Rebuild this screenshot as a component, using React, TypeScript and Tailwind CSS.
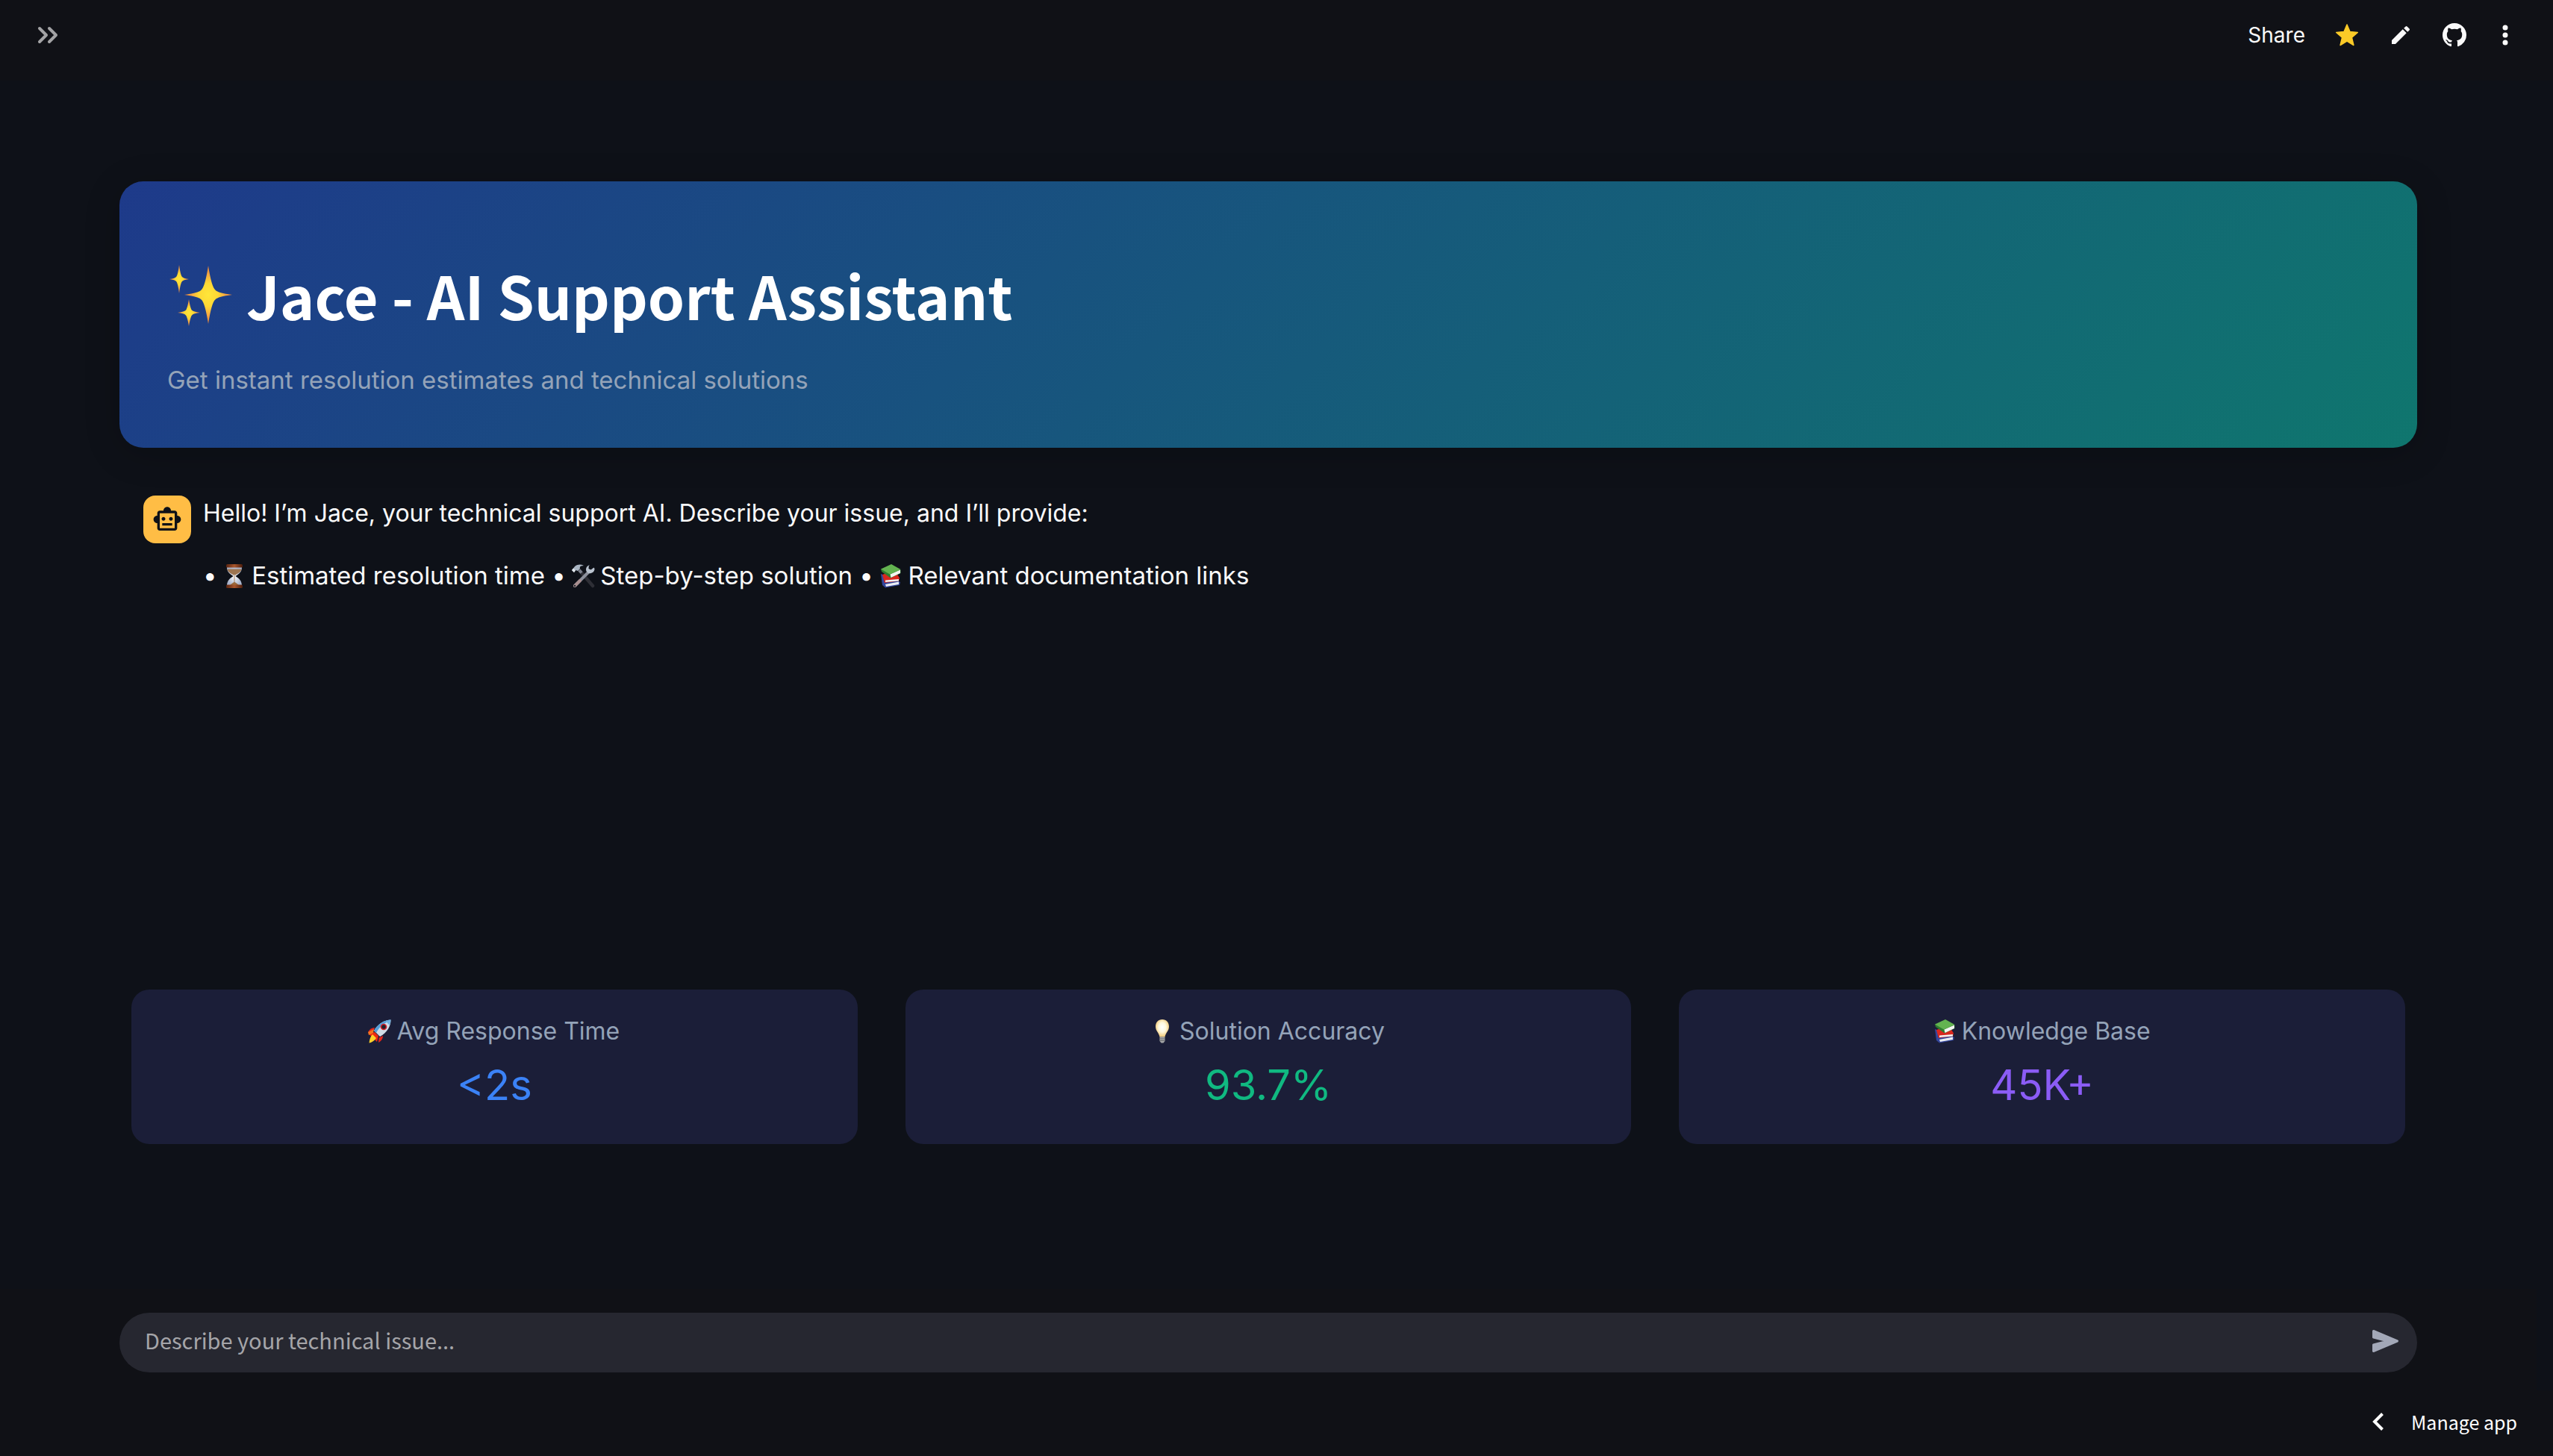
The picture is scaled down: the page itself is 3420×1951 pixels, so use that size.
import type { ReactNode } from "react";
import { MdEdit, MdOutlineSmartToy } from "react-icons/md";

function SparkleShape({ cx, cy, rx, ry }: { cx: number; cy: number; rx: number; ry: number }) {
  const kx = rx * 0.2;
  const ky = ry * 0.16;
  const d = `M${cx} ${cy - ry}Q${cx + kx * 0.7} ${cy - ky * 1.6} ${cx + kx * 1.5} ${cy - ky} Q${cx + kx * 2} ${cy - ky * 0.4} ${cx + rx} ${cy}Q${cx + kx * 2} ${cy + ky * 0.4} ${cx + kx * 1.5} ${cy + ky}Q${cx + kx * 0.7} ${cy + ky * 1.6} ${cx} ${cy + ry}Q${cx - kx * 0.7} ${cy + ky * 1.6} ${cx - kx * 1.5} ${cy + ky}Q${cx - kx * 2} ${cy + ky * 0.4} ${cx - rx} ${cy}Q${cx - kx * 2} ${cy - ky * 0.4} ${cx - kx * 1.5} ${cy - ky}Q${cx - kx * 0.7} ${cy - ky * 1.6} ${cx} ${cy - ry}Z`;
  return <path d={d} fill="url(#sparkle)" />;
}

function Sparkles() {
  return (
    <svg viewBox="0 0 88 88" className="size-[88px] shrink-0" role="img" aria-label="Sparkles">
      <defs>
        <radialGradient id="sparkle">
          <stop offset="0" stopColor="#ffe63a" />
          <stop offset="0.4" stopColor="#fdd835" />
          <stop offset="0.7" stopColor="#f5a742" />
          <stop offset="1" stopColor="#e8823a" />
        </radialGradient>
      </defs>
      <SparkleShape cx={55} cy={44} rx={32} ry={39} />
      <SparkleShape cx={16} cy={23} rx={13} ry={19} />
      <SparkleShape cx={29} cy={68} rx={15} ry={18} />
    </svg>
  );
}

function Emoji({ label, children }: { label: string; children: ReactNode }) {
  return (
    <svg viewBox="0 0 36 36" className="-mx-1 inline-block size-9 align-[-7px]" role="img" aria-label={label}>
      {children}
    </svg>
  );
}

function Hourglass() {
  return (
    <Emoji label="Hourglass">
      <defs>
        <linearGradient id="wood">
          <stop offset="0" stopColor="#5a2410" />
          <stop offset="0.5" stopColor="#a8562c" />
          <stop offset="1" stopColor="#4c1d0c" />
        </linearGradient>
        <radialGradient id="glass">
          <stop offset="0" stopColor="#ffffff" />
          <stop offset="1" stopColor="#a9b4cc" />
        </radialGradient>
      </defs>
      <path d="M8 6h20c0 7-4 9-8.500 12 4.500 3 8.500 6 8.500 13H8c0-7 4-10 8.500-13C12 15 8 13 8 6z" fill="url(#glass)" />
      <path d="M8.500 8.500h19c-.8 4-4 5.500-8.200 8h-2.600c-4.200-2.500-7.400-4-8.200-8z" fill="#9d7550" />
      <path d="M17.600 17h.8v9c2 1 5 3 6 5H11.600c1-2 4-4 6-5z" fill="#9a6a3c" />
      <rect x="7" y="2" width="22" height="4.500" rx="1.500" fill="url(#wood)" />
      <rect x="7" y="29.500" width="22" height="4.500" rx="1.500" fill="url(#wood)" />
    </Emoji>
  );
}

function Tools() {
  return (
    <Emoji label="Hammer and wrench">
      <path d="M13 10l18 21" stroke="#2e2f36" strokeWidth="4.500" strokeLinecap="round" />
      <path d="M13 10l3 3.500" stroke="#7d828e" strokeWidth="4" />
      <path d="M7 31L27 11" stroke="#8b8f9b" strokeWidth="4" strokeLinecap="round" />
      <path d="M7 31l7-7" stroke="#a98f90" strokeWidth="4" strokeLinecap="round" />
      <circle cx="7" cy="31" r="1.200" fill="#22242b" />
      <path d="M27 3c-4 1-6 5-4.500 8.500L25 14c4 1 8.500-1 8.500-6l-1-1.500-4 3-3-1.500.3-3.500z" fill="#b9c3cf" />
      <path d="M3 10l4-5c4-3 8-3 12-1-4 0-6 1-5 4l-3 3-3-1-2 3z" fill="#a9b5c2" />
      <path d="M3 10l2-2.500 3 3L6 13z" fill="#e3e9ee" />
    </Emoji>
  );
}

function Books() {
  return (
    <Emoji label="Books">
      <path d="M5 15l2 15 4 3.500 19-3.500 1-4-8-4z" fill="#33459b" />
      <path d="M11 29l18-3.500v3.500l-17 3z" fill="#e9ecf2" />
      <path d="M7 16l3 11 19-2.500 1-4-3-5-10-3z" fill="#d9271e" />
      <path d="M11 23.500l18-1.500v2.500l-18 1.500z" fill="#f1f1f1" />
      <path d="M5 8.500L6 12l12 8.500L31.500 14v-4.500z" fill="#2f7d30" />
      <path d="M17.500 15.500L31 9.500v4.500l-12.500 6z" fill="#f3f5f0" />
      <path d="M5 8.500L19 2l12.500 7L17 15.500z" fill="#63b350" />
    </Emoji>
  );
}

function Rocket() {
  return (
    <Emoji label="Rocket">
      <path d="M12 13c-4 0-7 2-9 6l6.500-.5zM23 24c0 4-2 7-6 9l.5-6.500z" fill="#e1251b" />
      <path d="M4 21l8-2 5 5-2 8-3-3-6 4 3-6z" fill="#ee2a12" />
      <path d="M9 22l5 5c-2 3-6 6-9.500 6.500C5 29 6 25 9 22z" fill="#fcd12a" />
      <path d="M3 19l8-4-1 5-6 3z" fill="#f5731f" />
      <path d="M33.500 2.500C25 3 17 7 11 17l8 8c10-6 14.500-14 14.500-22.500z" fill="#cfdbe6" />
      <path d="M33.500 2.500C25 3 17 7 11 17l3 3C18 12 25 7 33.500 2.500z" fill="#549ed8" />
      <path d="M33.500 2.500c-2.500.1-5 .6-7.200 1.600l5.600 5.600c1-2.300 1.500-4.800 1.600-7.200z" fill="#6fb0e0" />
      <circle cx="24" cy="12" r="4.300" fill="#d8202a" />
      <circle cx="24" cy="12" r="2.700" fill="#20232e" />
    </Emoji>
  );
}

function Bulb() {
  return (
    <Emoji label="Light bulb">
      <defs>
        <radialGradient id="bulb" cy="0.45">
          <stop offset="0" stopColor="#ffffff" />
          <stop offset="0.55" stopColor="#fff8dc" />
          <stop offset="1" stopColor="#f3cf85" />
        </radialGradient>
      </defs>
      <path d="M18 2c-5.500 0-9 4-9 9.500 0 6 4.500 8 5.500 14h7c1-6 5.500-8 5.500-14C27 6 23.500 2 18 2z" fill="url(#bulb)" />
      <path d="M14.500 25.500h7v5.500l-2 2.500h-3l-2-2.500z" fill="#a6a7a8" />
      <path d="M14.500 28h7M14.500 30.500h7" stroke="#66686c" strokeWidth="1" />
    </Emoji>
  );
}

function GithubMark() {
  return (
    <svg viewBox="0 0 16 16" fill="currentColor" className="size-8" aria-hidden="true">
      <path d="M8 0C3.58 0 0 3.58 0 8c0 3.540 2.290 6.530 5.470 7.590.4.070.55-.17.55-.38 0-.19-.01-.82-.01-1.490-2.010.37-2.530-.49-2.690-.94-.09-.23-.48-.94-.82-1.130-.28-.15-.68-.52-.01-.53.63-.01 1.080.58 1.230.82.72 1.210 1.870.87 2.330.66.07-.52.28-.87.51-1.070-1.780-.2-3.640-.89-3.640-3.950 0-.87.31-1.590.82-2.150-.08-.2-.36-1.020.08-2.120 0 0 .67-.21 2.200.82.640-.18 1.320-.27 2-.27s1.360.09 2 .27c1.530-1.040 2.200-.82 2.200-.82.44 1.100.16 1.920.08 2.120.51.56.82 1.270.82 2.150 0 3.070-1.870 3.750-3.650 3.950.29.25.54.73.54 1.480 0 1.070-.01 1.930-.01 2.200 0 .21.15.46.55.38A8.010 8.010 0 0 0 16 8c0-4.420-3.580-8-8-8z" />
    </svg>
  );
}

function Header() {
  return (
    <header className="flex h-[108px] shrink-0 items-start justify-between bg-[#101116] px-12 pt-[27px]">
      <button aria-label="Open sidebar" className="flex size-10 items-center text-[#a3a3a5]">
        <svg viewBox="0 0 32 32" fill="none" stroke="currentColor" strokeWidth="4" strokeLinecap="round" strokeLinejoin="round" className="size-8">
          <path d="M5 7l9 9-9 9M18 7l9 9-9 9" />
        </svg>
      </button>
      <nav className="flex h-10 items-center text-[#fafafa]">
        <button className="mr-10 text-[28px] leading-10">Share</button>
        <button aria-label="Favorite" className="mr-10">
          <svg viewBox="0 0 32 32" fill="#fbca27" stroke="#fbca27" strokeWidth="1.500" strokeLinejoin="round" className="size-8" aria-hidden="true">
            <path d="M16 2l4 9.500 10.300 1-7.800 6.800 2.400 10.200L16 24l-8.900 5.500 2.400-10.200-7.800-6.800 10.300-1z" />
          </svg>
        </button>
        <button aria-label="Edit" className="mr-10">
          <MdEdit className="size-8" />
        </button>
        <button aria-label="View on GitHub" className="mr-9">
          <GithubMark />
        </button>
        <button aria-label="More options">
          <svg viewBox="0 0 32 32" fill="currentColor" className="size-8" aria-hidden="true">
            <circle cx="16" cy="6" r="3.500" />
            <circle cx="16" cy="16" r="3.500" />
            <circle cx="16" cy="26" r="3.500" />
          </svg>
        </button>
      </nav>
    </header>
  );
}

function Metric({ icon, label, value, tone }: { icon: ReactNode; label: string; value: string; tone: string }) {
  return (
    <article className="rounded-3xl bg-[#1b1e38] px-8 pt-8 pb-[43px] text-center">
      <h2 className="text-[32px] leading-[48px] text-[#94a3b8]">
        {icon} {label}
      </h2>
      <p className={`mt-3 text-[56px] leading-[72px] ${tone}`}>{value}</p>
    </article>
  );
}

export default function App() {
  return (
    <div className="flex min-h-screen flex-col bg-[#0e1118] font-['Inter',sans-serif] text-[#fafafa]">
      <Header />
      <main className="flex grow flex-col pr-[182px] pl-40">
        <section className="mt-[135px] rounded-[32px] bg-[linear-gradient(135deg,#1e3a8a,#0f766e)] px-16 pt-[104px] pb-[67px] shadow-[0_8px_48px_rgba(0,0,0,0.2)]">
          <h1 className="flex items-center gap-[18px] font-['Noto_Sans_CJK_SC',sans-serif] text-[79px] leading-[96px] font-bold text-white">
            <Sparkles />
            Jace - AI Support Assistant
          </h1>
          <p className="mt-[42px] text-[33px] leading-[48px] text-[#94a3b8]">Get instant resolution estimates and technical solutions</p>
        </section>

        <section className="mt-16 flex min-h-[662px] gap-4 px-8 text-[32px] leading-[48px]">
          <div className="flex size-16 shrink-0 items-center justify-center rounded-2xl bg-[#ffbd45] text-[#0e1117]">
            <MdOutlineSmartToy className="size-10" />
          </div>
          <div className="flex flex-col gap-[35px]">
            <p>Hello! I’m Jace, your technical support AI. Describe your issue, and I’ll provide:</p>
            <p className="text-[33px]">
              • <Hourglass /> Estimated resolution time • <Tools /> Step-by-step solution • <Books /> Relevant documentation links
            </p>
          </div>
        </section>

        <section className="grid grid-cols-3 gap-16 px-4">
          <Metric icon={<Rocket />} label="Avg Response Time" value="<2s" tone="text-[#3b82f6]" />
          <Metric icon={<Bulb />} label="Solution Accuracy" value="93.7%" tone="text-[#10b981]" />
          <Metric icon={<Books />} label="Knowledge Base" value="45K+" tone="text-[#8b5cf6]" />
        </section>
      </main>

      <form className="mr-[22px] bg-[#101116] pt-8 pr-40 pb-6 pl-40 font-['Noto_Sans_CJK_SC',sans-serif]" onSubmit={(e) => e.preventDefault()}>
        <div className="flex h-20 items-center rounded-full bg-[#262730] pr-5 pl-[34px]">
          <input
            aria-label="Describe your technical issue"
            placeholder="Describe your technical issue..."
            className="mb-2 min-w-0 grow bg-transparent text-[29px] leading-[48px] outline-none placeholder:text-[#a5a5a9]"
          />
          <button aria-label="Send" className="mb-1 text-[#a3a8b8]">
            <svg viewBox="0 0 40 40" fill="currentColor" stroke="currentColor" strokeWidth="3" strokeLinejoin="round" className="size-10" aria-hidden="true">
              <path d="M1.500 6.500L33.500 20l-32 13.500v-8.500L18 20.700v-1.400L1.500 15z" />
            </svg>
          </button>
        </div>
      </form>

      <footer className="flex h-[88px] shrink-0 justify-end bg-[#101116] pt-[22px] pr-12 font-['Noto_Sans_CJK_SC',sans-serif]">
        <button className="flex h-10 items-center gap-8 text-[25px] leading-10 text-white">
          <svg viewBox="0 0 24 24" fill="none" stroke="currentColor" strokeWidth="4" className="size-6" aria-hidden="true">
            <path d="M17.500 1.500L7 12l10.500 10.500" />
          </svg>
          Manage app
        </button>
      </footer>
    </div>
  );
}
